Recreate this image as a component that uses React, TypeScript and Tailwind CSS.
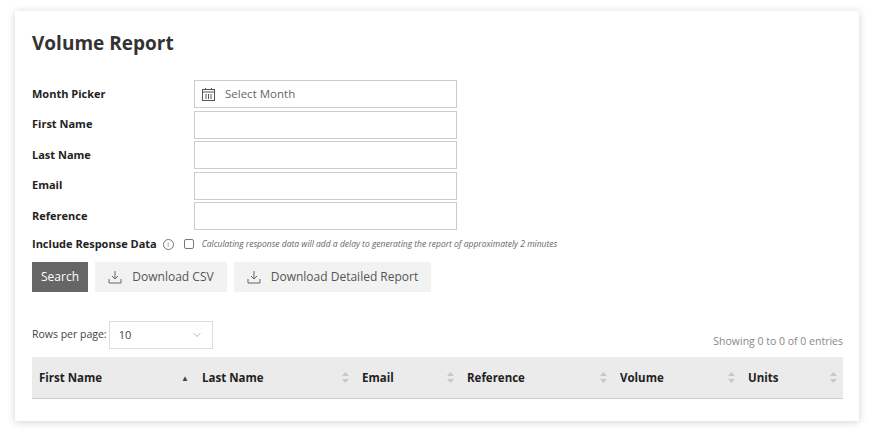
import { ChevronDown } from 'lucide-react';

const font = { fontFamily: '"Open Sans", sans-serif' };

function Calendar() {
  return (
    <svg width="13" height="13" viewBox="0 0 13 13" fill="none" stroke="#555" strokeWidth="1">
      <rect x="0.5" y="1.5" width="12" height="11" />
      <line x1="0.5" y1="4" x2="12.5" y2="4" />
      <line x1="3.5" y1="0" x2="3.5" y2="2" />
      <line x1="9.5" y1="0" x2="9.5" y2="2" />
      <line x1="4" y1="6" x2="4" y2="11" />
      <line x1="6.5" y1="6" x2="6.5" y2="11" />
      <line x1="9" y1="6" x2="9" y2="11" />
    </svg>
  );
}

function DownloadIcon() {
  return (
    <svg width="14" height="14" viewBox="0 0 14 14" fill="none" stroke="#666" strokeWidth="1">
      <path d="M7 1v8M4 6l3 3 3-3M1 9v4h12V9" />
    </svg>
  );
}

function SortIcon({ active }: { active?: boolean }) {
  if (active) return <span className="text-[8px] text-[#444]">▲</span>;
  return (
    <svg width="7" height="11" viewBox="0 0 7 11" fill="#c8c8c8">
      <path d="M3.5 0L7 4H0z M3.5 11L0 7h7z" />
    </svg>
  );
}

const fields = ['First Name', 'Last Name', 'Email', 'Reference'];
const cols: [string, number, boolean?][] = [
  ['First Name', 163, true],
  ['Last Name', 160],
  ['Email', 105],
  ['Reference', 153],
  ['Volume', 128],
  ['Units', 102],
];

export default function App() {
  return (
    <div className="w-[874px] h-[440px] bg-white pt-[11px] px-[15px]" style={font}>
      <div className="h-[410px] bg-white shadow-[0_1px_8px_rgba(0,0,0,0.18)] pl-[17px] pr-[16px] pt-[18px]">
        <h1 className="text-[19px] font-bold text-[#333] leading-[28px]">Volume Report</h1>
        <div className="mt-[23px] flex flex-col gap-[2.5px]">
          <div className="flex items-center">
            <label className="w-[162px] text-[11px] font-bold text-[#222]">Month Picker</label>
            <div className="w-[263px] h-[28px] border border-[#ccc] flex items-center gap-[10px] px-[7px]">
              <Calendar />
              <span className="text-[11.5px] text-[#666]">Select Month</span>
            </div>
          </div>
          {fields.map((f) => (
            <div key={f} className="flex items-center">
              <label className="w-[162px] text-[11px] font-bold text-[#222]">{f}</label>
              <div className="w-[263px] h-[28px] border border-[#ccc]" />
            </div>
          ))}
        </div>
        <div className="mt-[7px] flex items-center h-[14px]">
          <span className="text-[11px] font-bold text-[#222]">Include Response Data</span>
          <span className="ml-[6px] w-[11px] h-[11px] rounded-full border border-[#777] text-[7px] text-[#777] flex items-center justify-center leading-none">i</span>
          <span className="ml-[10px] w-[10px] h-[10px] border border-[#777] rounded-[2px]" />
          <span className="ml-[8px] text-[8.5px] italic text-[#666]">
            Calculating response data will add a delay to generating the report of approximately 2 minutes
          </span>
        </div>
        <div className="mt-[11px] flex gap-[7px]">
          <button className="h-[30px] w-[56px] bg-[#666] text-white text-[12px]">Search</button>
          <button className="h-[30px] w-[132px] bg-[#f2f2f2] text-[#555] text-[12px] flex items-center justify-center gap-[10px]">
            <DownloadIcon />Download CSV
          </button>
          <button className="h-[30px] w-[197px] bg-[#f2f2f2] text-[#555] text-[12px] flex items-center justify-center gap-[10px]">
            <DownloadIcon />Download Detailed Report
          </button>
        </div>
        <div className="mt-[29px] flex items-end justify-between">
          <div className="flex items-center gap-[2px]">
            <span className="text-[10.5px] text-[#444]">Rows per page:</span>
            <div className="w-[104px] h-[28px] border border-[#ddd] flex items-center justify-between px-[9px] text-[11px] text-[#444]">
              10 <ChevronDown size={12} color="#999" strokeWidth={1.5} />
            </div>
          </div>
          <span className="text-[10.5px] text-[#888] mb-[-1px]">Showing 0 to 0 of 0 entries</span>
        </div>
        <div className="mt-[8px] h-[42px] bg-[#ebebeb] border-b border-[#ccc] flex">
          {cols.map(([c, w, a]) => (
            <div key={c} style={{ width: w }} className="flex items-center justify-between pl-[7px] pr-[6px] text-[11.5px] font-bold text-[#222]">
              {c}
              <SortIcon active={a} />
            </div>
          ))}
        </div>
      </div>
    </div>
  );
}
